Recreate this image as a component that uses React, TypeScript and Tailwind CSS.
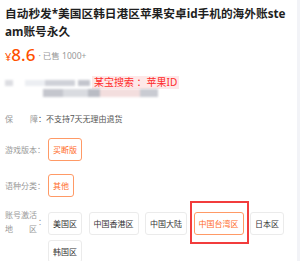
import React from "react";

const font = { fontFamily: '"Noto Sans", "Noto Sans CJK SC", sans-serif' };

const regions = ["美国区", "中国香港区", "中国大陆", "中国台湾区", "日本区", "韩国区"];

function Tag({ text, active }: { text: string; active?: boolean }) {
  return (
    <div
      className={`flex h-[23px] items-center whitespace-nowrap rounded-[3px] border px-[4px] text-[8px] ${
        active ? "border-[#ff9a66] text-[#ff6a1f]" : "border-[#ebebeb] text-[#333]"
      }`}
    >
      {text}
    </div>
  );
}

function Blur({ w, c }: { w: number; c: string }) {
  return <div className={`h-full ${c}`} style={{ width: w }} />;
}

export default function App() {
  return (
    <div className="flex h-[261px] w-[300px] overflow-hidden bg-white" style={font}>
      <div className="flex-1 pl-[5px]">
        <div className="mt-[4px] w-[284px] break-all text-[11.7px] font-bold leading-[18px] text-[#1f1f1f]">
          自动秒发*美国区韩日港区苹果安卓id手机的海外账steam账号永久
        </div>

        <div className="mt-[6px] flex h-[18px] items-end text-[#ff5000]">
          <span className="text-[11px] leading-[14px]">¥</span>
          <span className="text-[17px] font-medium leading-[18px]">8.6</span>
          <span className="mb-[2px] ml-[3px] text-[8.5px] leading-[12px] text-[#999]">· 已售 1000+</span>
        </div>

        {/* blurred contact line */}
        <div className="mt-[12px] flex h-[13px] items-center">
          <div className="flex h-[6px] items-center blur-[1px]">
            <Blur w={8} c="bg-[#dcdde2]" />
            <div className="w-[12px]" />
            <Blur w={20} c="bg-[#eceef2]" />
            <Blur w={30} c="bg-[#cfd1d8]" />
            <div className="w-[3px]" />
            <Blur w={12} c="bg-[#c3c5cd]" />
          </div>
          <div className="ml-[2px] flex h-[13px] items-center bg-[#fde8e8] px-[2px] text-[10px] text-[#ff2b2b]">
            某宝搜索 ：苹果ID
          </div>
        </div>
        <div className="flex h-[8px] items-center pl-[38px] blur-[1px]">
          <Blur w={20} c="bg-[#c4c6cd]" />
          <Blur w={25} c="bg-[#d9dbe0]" />
          <Blur w={12} c="bg-[#b9bcc4]" />
          <Blur w={40} c="bg-[#f3dede]" />
          <Blur w={18} c="bg-[#c9cbd2]" />
        </div>

        <div className="mt-[16px] flex h-[12px] items-center whitespace-nowrap text-[8px]">
          <span className="flex w-[33px] justify-between text-[#999]">
            <span>保</span>
            <span>障</span>
          </span>
          <span className="text-[#555]">：不支持7天无理由退货</span>
        </div>

        <div className="mt-[13px] flex items-center">
          <span className="w-[43px] whitespace-nowrap text-[8px] text-[#999]">游戏版本：</span>
          <Tag text="买断版" active />
        </div>

        <div className="mt-[13px] flex items-center">
          <span className="w-[43px] whitespace-nowrap text-[8px] text-[#999]">语种分类：</span>
          <Tag text="其他" active />
        </div>

        <div className="mt-[11px] flex items-start">
          <div className="flex w-[43px] items-center whitespace-nowrap text-[8px] leading-[14px] text-[#999]">
            <div className="w-[33px]">
              <div>账号激活</div>
              <div className="flex w-[32px] justify-between">
                <span>地</span>
                <span>区</span>
              </div>
            </div>
            <span>：</span>
          </div>
          <div className="flex w-[240px] flex-wrap gap-x-[6.5px] gap-y-[5px] pt-[4px]">
            {regions.map((r) => (
              <div key={r} className="relative">
                <Tag text={r} active={r === "中国台湾区"} />
                {r === "中国台湾区" && (
                  <div className="absolute -bottom-[9px] -left-[4px] -right-[5px] -top-[11px] border-2 border-[#f23c3c]" />
                )}
              </div>
            ))}
          </div>
        </div>
      </div>
      <div className="w-[3px] bg-[#f2f3f7]" />
    </div>
  );
}
